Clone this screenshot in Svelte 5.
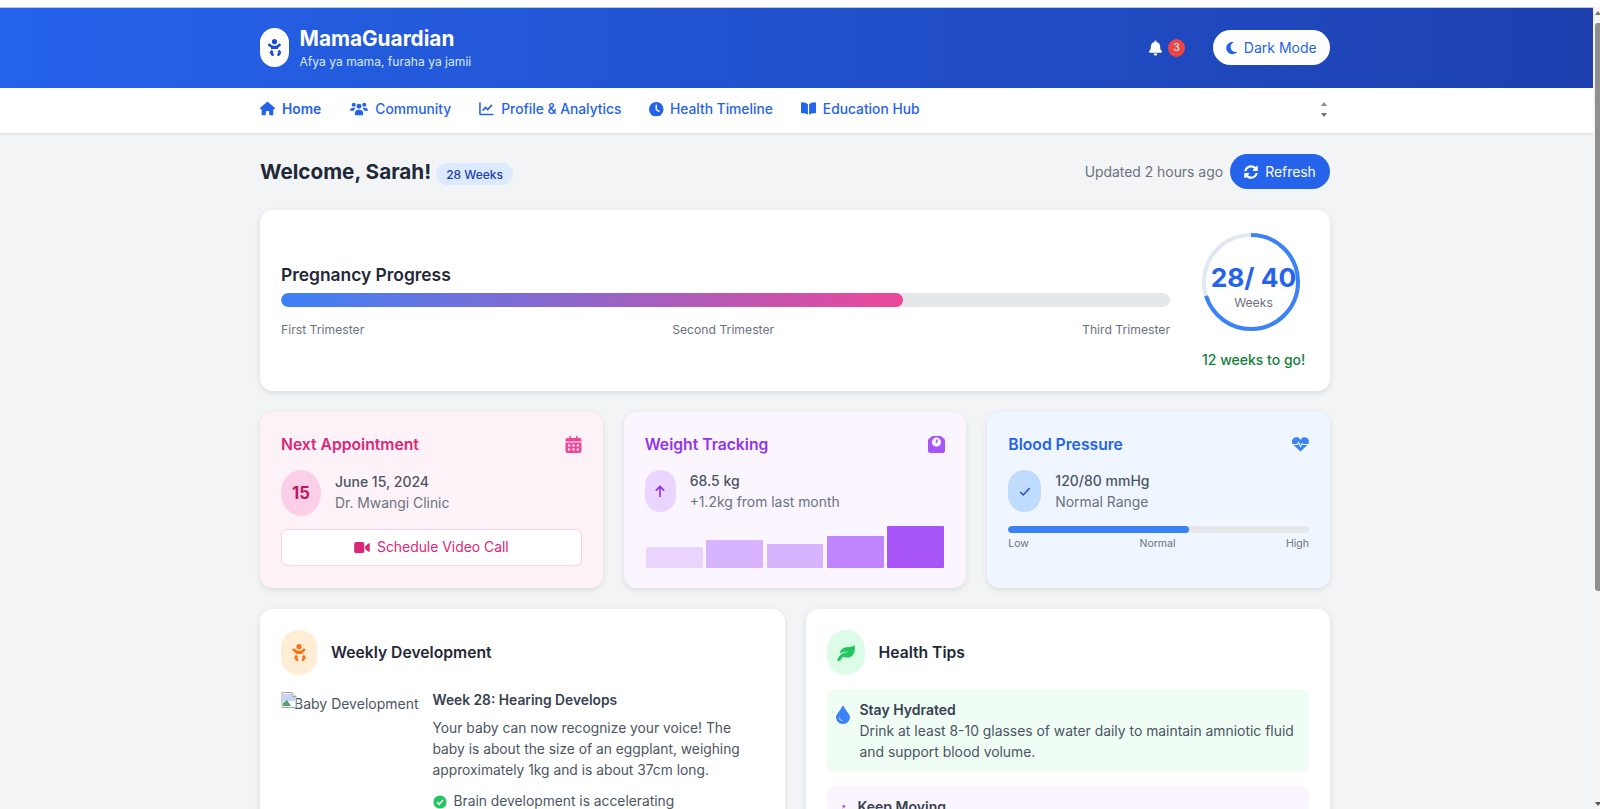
<script>
  const bars = [
    { h: 21, c: '#e9d5ff' },
    { h: 28, c: '#d8b4fe' },
    { h: 24, c: '#d8b4fe' },
    { h: 32, c: '#c084fc' },
    { h: 42, c: '#a855f7' }
  ];
</script>

{#snippet baby()}
  <svg viewBox="0 0 384 512" class="fill"><path d="M192 160c44.200 0 80-35.800 80-80S236.200 0 192 0s-80 35.800-80 80 35.800 80 80 80zm-53.400 248.800l25.600-32-61.500-51.200L56.800 383c-11.400 14.200-11.700 34.400-.8 49l48 64c7.900 10.500 19.900 16 32 16 8.300 0 16.800-2.600 24-8 17.700-13.200 21.200-38.300 8-56l-29.400-39.200zm142.700-32l25.600 32L277.500 448c-13.200 17.700-9.700 42.800 8 56 7.200 5.400 15.600 8 24 8 12.200 0 24.200-5.500 32-16l48-64c10.900-14.600 10.600-34.800-.8-49l-45.900-57.400-61.500 51.200zm94.500-223.200c-13.500-17.500-38.600-20.700-56.100-7.200l-31 24C270.800 197.200 230 200 192 200s-78.800-2.800-105-35.100l-31-24c-17.500-13.500-42.600-10.300-56.100 7.200-13.500 17.500-10.300 42.600 7.200 56.100L67 247.400c6.300 4.900 12.900 9.100 19.800 13V304h210.400v-43.500c6.900-3.900 13.500-8.200 19.800-13l51.600-36.700c17.500-13.500 20.700-38.600 7.200-56.100z"/></svg>
{/snippet}

<div class="page">
  <header>
    <div class="wrap head-row">
      <div class="brand">
        <span class="logo">{@render baby()}</span>
        <div>
          <h1>MamaGuardian</h1>
          <p>Afya ya mama, furaha ya jamii</p>
        </div>
      </div>
      <div class="head-right">
        <svg class="bell fill" viewBox="0 0 448 512"><path d="M224 0c-17.700 0-32 14.300-32 32V51.200C119 66 64 130.600 64 208v18.800c0 47-17.300 92.400-48.500 127.600l-7.400 8.300c-8.400 9.400-10.400 22.900-5.300 34.400S19.400 416 32 416H416c12.600 0 24-7.400 29.200-18.900s3.100-25-5.300-34.400l-7.400-8.300C401.300 319.200 384 273.900 384 226.800V208c0-77.400-55-142-128-156.800V32c0-17.700-14.300-32-32-32zm45.300 493.300c12-12 18.700-28.300 18.700-45.300H160c0 17 6.700 33.300 18.700 45.300s28.300 18.700 45.300 18.700s33.300-6.700 45.300-18.700z"/></svg>
        <span class="count">3</span>
        <button class="dark">
          <svg class="fill" viewBox="0 0 384 512"><path d="M223.500 32C100 32 0 132.300 0 256S100 480 223.500 480c60.600 0 115.500-24.200 155.800-63.400c5-4.900 6.300-12.500 3.100-18.700s-10.100-9.700-17-8.500c-9.800 1.700-19.800 2.600-30.100 2.600c-96.900 0-175.500-78.800-175.500-176c0-65.800 36-123.100 89.300-153.300c6.100-3.500 9.200-10.500 7.700-17.300s-7.300-11.900-14.300-12.500c-6.300-.5-12.600-.8-19-.8z"/></svg>
          Dark Mode
        </button>
      </div>
    </div>
  </header>

  <nav>
    <div class="wrap nav-row">
      <a class="active" href="#home">
        <svg class="fill" viewBox="0 0 576 512"><path d="M575.800 255.500c0 18-15 32.100-32 32.100h-32l.7 160.200c0 2.700-.2 5.400-.5 8.100V472c0 22.100-17.900 40-40 40H392c-22.100 0-40-17.900-40-40V384c0-17.700-14.300-32-32-32H256c-17.700 0-32 14.300-32 32v88c0 22.100-17.900 40-40 40H104c-22.100 0-40-17.900-40-40V360c0-.9 0-1.900.1-2.800V287.600H32c-18 0-32-14-32-32.100c0-9 3-17 10-24L266.400 8c7-7 15-8 22-8s15 2 21 7L564.800 231.500c8 7 12 15 11 24z"/></svg>
        Home
      </a>
      <a href="#community">
        <svg class="fill people" viewBox="0 0 24 18"><circle cx="5" cy="4" r="2.700"/><circle cx="19" cy="4" r="2.700"/><circle cx="12" cy="6" r="3.300"/><path d="M0 12c0-2.500 1.700-4 4-4h2c.5 0 1 .1 1.400.3C6 9.500 5.400 10.800 5.300 12H0zM24 12c0-2.500-1.700-4-4-4h-2c-.5 0-1 .1-1.400.3 1.400 1.200 2 2.500 2.100 3.700H24zM6.500 15c0-2.500 2-4.500 4.500-4.500h2c2.500 0 4.500 2 4.500 4.500v1.500c0 .8-.7 1.500-1.500 1.500H8c-.8 0-1.500-.7-1.500-1.500z"/></svg>
        Community
      </a>
      <a href="#profile">
        <svg viewBox="0 0 16 14" class="line"><path d="M1 .5v11.700c0 .7.500 1.200 1.200 1.200H15.500"/><path d="M3.800 9.300 7 5.800l2.300 2.300 4.500-5"/></svg>
        Profile &amp; Analytics
      </a>
      <a href="#timeline">
        <svg class="fill clock" viewBox="0 0 16 16"><circle cx="8" cy="8" r="8"/><path d="M8 3.500V8.300l3 2" fill="none" stroke="#fff" stroke-width="1.500" stroke-linecap="round"/></svg>
        Health Timeline
      </a>
      <a href="#education">
        <svg class="fill" viewBox="0 0 18 15"><path d="M8.300 2.600V15C6.600 13.800 4 13.300 1.200 13.300.5 13.300 0 12.800 0 12.100V1.400C0 .7.500.1 1.200.1 4 0 6.800.9 8.300 2.600zM9.700 2.600V15c1.700-1.200 4.300-1.700 7.100-1.700.7 0 1.200-.5 1.200-1.200V1.400C18 .7 17.500.1 16.800.1 14 0 11.200.9 9.700 2.600z"/></svg>
        Education Hub
      </a>
      <span class="spin"><i class="up"></i><i class="down"></i></span>
    </div>
  </nav>

  <main class="wrap">
    <section class="welcome">
      <div class="hello">
        <h2>Welcome, Sarah!</h2>
        <span class="weeks">28 Weeks</span>
      </div>
      <div class="update">
        <span>Updated 2 hours ago</span>
        <button class="refresh">
          <svg class="fill" viewBox="0 0 512 512"><path d="M370.720 133.280C339.458 104.008 298.888 87.962 255.848 88c-77.458.068-144.328 53.178-162.791 126.850-1.344 5.363-6.122 9.150-11.651 9.150H24.103c-7.498 0-13.194-6.807-11.807-14.176C33.933 94.924 134.813 8 256 8c66.448 0 126.791 26.136 171.315 68.685L463.030 40.970C478.149 25.851 504 36.559 504 57.941V192c0 13.255-10.745 24-24 24H345.941c-21.382 0-32.090-25.851-16.971-40.971l41.750-41.749zM32 296h134.059c21.382 0 32.090 25.851 16.971 40.971l-41.750 41.750c31.262 29.273 71.835 45.319 114.876 45.280 77.418-.07 144.315-53.144 162.787-126.849 1.344-5.363 6.122-9.150 11.651-9.150h57.304c7.498 0 13.194 6.807 11.807 14.176C478.067 417.076 377.187 504 256 504c-66.448 0-126.791-26.136-171.315-68.685L48.970 471.030C33.851 486.149 8 475.441 8 454.059V320c0-13.255 10.745-24 24-24z"/></svg>
          Refresh
        </button>
      </div>
    </section>

    <section class="card progress">
      <div class="track-col">
        <h3>Pregnancy Progress</h3>
        <div class="track"><div class="track-fill"></div></div>
        <div class="tri"><span>First Trimester</span><span>Second Trimester</span><span>Third Trimester</span></div>
      </div>
      <div class="ring-col">
        <div class="ring">
          <svg viewBox="0 0 98 98">
            <circle cx="49" cy="49" r="47" fill="none" stroke="#e2e8f0" stroke-width="4"/>
            <circle cx="49" cy="49" r="47" fill="none" stroke="#3b82f6" stroke-width="4" stroke-dasharray="207 295.300" transform="rotate(-90 49 49)"/>
          </svg>
          <div class="ring-text"><b>28/ 40</b><span>Weeks</span></div>
        </div>
        <p class="togo">12 weeks to go!</p>
      </div>
    </section>

    <section class="three">
      <div class="mini pink">
        <div class="mini-head">
          <h4>Next Appointment</h4>
          <svg class="mini-icon fill" viewBox="0 0 16 17"><path d="M4 0h1.500v2h5V0H12v2h2c1.100 0 2 .9 2 2v1.500H0V4c0-1.100.9-2 2-2h2zM0 6.500h16V15c0 1.100-.9 2-2 2H2c-1.100 0-2-.9-2-2z"/><g fill="#fdf2f8"><rect x="2.500" y="8.500" width="2.200" height="2"/><rect x="6.900" y="8.500" width="2.200" height="2"/><rect x="11.300" y="8.500" width="2.200" height="2"/><rect x="2.500" y="12.500" width="2.200" height="2"/><rect x="6.900" y="12.500" width="2.200" height="2"/><rect x="11.300" y="12.500" width="2.200" height="2"/></g></svg>
        </div>
        <div class="stat">
          <span class="dot day">15</span>
          <div><strong>June 15, 2024</strong><small>Dr. Mwangi Clinic</small></div>
        </div>
        <button class="call">
          <svg class="fill" viewBox="0 0 17 12"><rect width="11" height="12" rx="2"/><path d="M12 4.500 15.500 1.500c.6-.5 1.500-.1 1.500.7v7.600c0 .8-.9 1.200-1.500.7L12 7.500z"/></svg>
          Schedule Video Call
        </button>
      </div>

      <div class="mini purple">
        <div class="mini-head">
          <h4>Weight Tracking</h4>
          <svg class="mini-icon fill" viewBox="0 0 18 18"><path d="M5 0h8c.5 0 1 .2 1.300.5l3.200 3c.3.300.5.800.5 1.300V16c0 1.100-.9 2-2 2H2c-1.100 0-2-.9-2-2V4.800c0-.5.2-1 .5-1.300l3.200-3C4 .2 4.500 0 5 0z"/><circle cx="9" cy="6.500" r="4.800" fill="#faf5ff"/><path d="M9.800 3.800 8.600 7.500" stroke="#a855f7" stroke-width="1.500"/></svg>
        </div>
        <div class="stat">
          <span class="dot up-dot">
            <svg viewBox="0 0 12 14" class="glyph"><path d="M6 13V1.500M1.500 6 6 1.500 10.500 6"/></svg>
          </span>
          <div><strong>68.5 kg</strong><small>+1.2kg from last month</small></div>
        </div>
        <div class="bars">
          {#each bars as bar}
            <div style="height:{bar.h}px;background:{bar.c}"></div>
          {/each}
        </div>
      </div>

      <div class="mini blue">
        <div class="mini-head">
          <h4>Blood Pressure</h4>
          <svg class="mini-icon fill" viewBox="0 0 18 15"><path d="M9 15 1.600 8.100C-.5 6.100-.5 2.800 1.600 1 3.600-.7 6.500-.2 8 1.400L9 2.400l1-1C11.500-.2 14.400-.7 16.400 1c2.100 1.800 2.100 5.100 0 7.100z"/><path d="M0 7.500h5.500L7 5.200l2 4.300 1.800-3 1 1h6.200" fill="none" stroke="#eff6ff" stroke-width="1.200"/></svg>
        </div>
        <div class="stat">
          <span class="dot check-dot">
            <svg viewBox="0 0 14 11" class="glyph"><path d="M1.500 6 5 9.500 12.500 1.500"/></svg>
          </span>
          <div><strong>120/80 mmHg</strong><small>Normal Range</small></div>
        </div>
        <div class="bp"><div></div></div>
        <div class="bp-labels"><span>Low</span><span>Normal</span><span>High</span></div>
      </div>
    </section>

    <section class="two">
      <div class="card big">
        <div class="big-head">
          <span class="badge orange">{@render baby()}</span>
          <h3>Weekly Development</h3>
        </div>
        <div class="dev">
          <span class="broken">
            <svg viewBox="0 0 16 16"><path d="M1 .5h10l4 4V15.500H1z" fill="#fff" stroke="#a8a8a8"/><path d="M11 .5V4.500h4" fill="#ddd" stroke="#a8a8a8"/><path d="M2 2h8v3h4v4H2z" fill="#c3d4f5"/><path d="M2 14V11l4-3 4 6z" fill="#5aa469"/></svg>
            Baby Development
          </span>
          <div class="dev-text">
            <h5>Week 28: Hearing Develops</h5>
            <p>Your baby can now recognize your voice! The baby is about the size of an eggplant, weighing approximately 1kg and is about 37cm long.</p>
            <div class="li">
              <svg viewBox="0 0 16 16"><circle cx="8" cy="8" r="7.500" fill="#22c55e"/><path d="M4.500 8.200 7 10.700l4.500-5" fill="none" stroke="#fff" stroke-width="1.800"/></svg>
              Brain development is accelerating
            </div>
          </div>
        </div>
      </div>

      <div class="card big">
        <div class="big-head">
          <span class="badge green">
            <svg class="fill" viewBox="0 0 18 16"><path d="M17.700.2c.5 3.500.2 7.500-2 10-2.300 2.600-6.200 2.800-9.300 1.500C5 12.800 4 14.200 3.500 15.500 3.200 16 .9 16 .2 15.500c.5-2.500 2-4.800 4-6.200 2.200-1.500 4.800-2.200 7.300-2.300-2.800-.5-6.200 0-8.500 1.500C3 4.800 5.800 2.700 9.500 2.300 12.500 2 15.500 1.800 17.700.2z"/></svg>
          </span>
          <h3>Health Tips</h3>
        </div>
        <div class="tip mint">
          <svg class="tip-icon drop" viewBox="0 0 14 18"><path d="M7 0c.5 0 .9.300 1.100.800C9.500 4.500 14 8.300 14 11.300 14 15 10.900 18 7 18s-7-3-7-6.700C0 8.300 4.500 4.500 5.900.8 6.100.3 6.500 0 7 0z" fill="#3b82f6"/><path d="M3.300 11.500c0 1.800 1.500 3.200 3.200 3.200" fill="none" stroke="#dbeafe" stroke-width=".9"/></svg>
          <div><h5>Stay Hydrated</h5><p>Drink at least 8-10 glasses of water daily to maintain amniotic fluid and support blood volume.</p></div>
        </div>
        <div class="tip lilac">
          <svg class="tip-icon walk" viewBox="0 0 10 18"><circle cx="6" cy="2" r="1.800" fill="#a855f7"/><path d="M5 5 3 9l3 3-1 5M5 6l3 3M3 9l-2 3" fill="none" stroke="#a855f7" stroke-width="2"/></svg>
          <div><h5>Keep Moving</h5></div>
        </div>
      </div>
    </section>
  </main>

  <aside class="scrollbar">
    <i class="sb-up"></i>
    <div class="thumb"></div>
    <i class="sb-down"></i>
  </aside>
</div>

<style>
  :global(body) {
    margin: 0;
    background: #f3f4f6;
    font-family: Inter, "Noto Sans", sans-serif;
    overflow: hidden;
  }
  * {
    box-sizing: border-box;
  }
  h1, h2, h3, h4, h5, p {
    margin: 0;
  }
  button {
    font-family: inherit;
    cursor: pointer;
    border: none;
  }
  svg {
    display: block;
    flex: none;
  }
  .fill {
    fill: currentColor;
  }
  .page {
    position: relative;
    height: 809px;
    width: 1600px;
    overflow: hidden;
    padding-top: 7px;
    background: #f3f4f6;
  }
  .page::before {
    content: "";
    position: absolute;
    inset: 0 0 auto 0;
    height: 7px;
    background: #fff;
  }
  .wrap {
    width: 1070px;
    margin-left: 260px;
  }
  header {
    width: 1593px;
    height: 80.500px;
    background: linear-gradient(90deg, #2563eb, #1e40af);
    color: #fff;
    border-top: 1px solid #b9c8e8;
    position: relative;
    display: flex;
    align-items: center;
  }
  .head-row {
    display: flex;
    align-items: center;
    justify-content: space-between;
  }
  .brand {
    display: flex;
    align-items: center;
    gap: 10.500px;
  }
  .logo {
    width: 29px;
    height: 39px;
    border-radius: 15px;
    background: #fff;
    color: #1d4ed8;
    display: flex;
    align-items: center;
    justify-content: center;
  }
  .logo svg {
    width: 13px;
    height: 17px;
  }
  .brand h1 {
    font-size: 20.800px;
    line-height: 26px;
    font-weight: 700;
    margin-top: 1px;
  }
  .brand p {
    font-size: 12.100px;
    line-height: 17px;
    margin-top: 1px;
    color: #dbeafe;
  }
  .head-right {
    display: flex;
    align-items: center;
  }
  .bell {
    width: 13px;
    height: 16px;
  }
  .count {
    width: 17px;
    height: 18px;
    border-radius: 50%;
    background: #ef4444;
    font-size: 10.500px;
    display: flex;
    align-items: center;
    justify-content: center;
    margin-left: 6px;
    margin-right: 28px;
  }
  .dark {
    height: 35px;
    width: 117px;
    border-radius: 18px;
    background: #fff;
    color: #2563eb;
    font-size: 14px;
    display: flex;
    align-items: center;
    justify-content: center;
    gap: 6.500px;
  }
  .dark svg {
    width: 11px;
    height: 14px;
  }
  nav {
    width: 1593px;
    height: 45.500px;
    background: #fff;
    box-shadow: 0 1px 3px rgba(0, 0, 0, 0.1);
    position: relative;
  }
  .nav-row {
    height: 100%;
    display: flex;
    align-items: center;
    gap: 28px;
    position: relative;
    padding-bottom: 3px;
  }
  nav a {
    display: flex;
    align-items: center;
    gap: 7px;
    color: #2563eb;
    font-size: 13.800px;
    font-weight: 500;
    text-decoration: none;
  }
  nav a.active {
    font-weight: 600;
    margin-right: 1px;
  }
  nav a svg {
    width: 15px;
    height: 15px;
  }
  nav a svg.people {
    width: 18px;
  }
  nav a svg.clock {
    width: 14.500px;
    height: 14.500px;
    margin-right: -1px;
  }
  .line {
    fill: none;
    stroke: currentColor;
    stroke-width: 1.700;
  }
  .spin {
    position: absolute;
    right: 3px;
    top: 14px;
    display: flex;
    flex-direction: column;
    gap: 7px;
  }
  .spin i {
    width: 0;
    height: 0;
    border-left: 3.500px solid transparent;
    border-right: 3.500px solid transparent;
  }
  .spin .up {
    border-bottom: 4px solid #8c8c8c;
  }
  .spin .down {
    border-top: 4px solid #6e6e6e;
  }
  main {
    padding-top: 21px;
  }
  .welcome {
    display: flex;
    align-items: center;
    justify-content: space-between;
    height: 35px;
  }
  .hello {
    display: flex;
    align-items: center;
    gap: 5px;
  }
  .hello h2 {
    font-size: 20.700px;
    font-weight: 700;
    color: #1f2937;
  }
  .weeks {
    background: #dbeafe;
    color: #1e40af;
    font-size: 12px;
    font-weight: 500;
    padding: 0 10px;
    height: 22px;
    display: flex;
    align-items: center;
    border-radius: 11px;
    margin-top: 5px;
  }
  .update {
    display: flex;
    align-items: center;
    gap: 7px;
    color: #6b7280;
    font-size: 13.900px;
  }
  .refresh {
    height: 35px;
    width: 100px;
    border-radius: 18px;
    background: #2563eb;
    color: #fff;
    font-size: 13.900px;
    display: flex;
    align-items: center;
    justify-content: center;
    gap: 7px;
  }
  .refresh svg {
    width: 14px;
    height: 14px;
  }
  .card {
    background: #fff;
    border-radius: 12.500px;
    box-shadow: 0 2px 6px rgba(0, 0, 0, 0.1);
  }
  .progress {
    margin-top: 21px;
    height: 181px;
    padding: 0 21px;
    display: flex;
    align-items: center;
    gap: 32px;
  }
  .track-col {
    flex: 1;
    padding-top: 2px;
    min-width: 0;
  }
  .progress h3 {
    font-size: 17.400px;
    font-weight: 600;
    color: #1f2937;
    line-height: 20px;
  }
  .track {
    height: 14px;
    margin-top: 8px;
    background: #e5e7eb;
    border-radius: 7px;
    overflow: hidden;
  }
  .track-fill {
    width: 70%;
    height: 100%;
    border-radius: 7px;
    background: linear-gradient(90deg, #3b82f6, #ec4899);
  }
  .tri {
    display: flex;
    justify-content: space-between;
    margin-top: 15px;
    font-size: 12.200px;
    line-height: 16px;
    color: #6b7280;
  }
  .ring-col {
    width: 107px;
  }
  .ring {
    position: relative;
    width: 98px;
    height: 98px;
  }
  .ring-text {
    position: absolute;
    left: 0;
    top: 29px;
    width: 103px;
    display: flex;
    flex-direction: column;
    align-items: center;
  }
  .ring-text b {
    font-size: 26.300px;
    line-height: 32px;
    font-weight: 700;
    color: #2563eb;
    white-space: nowrap;
  }
  .ring-text span {
    font-size: 12.200px;
    line-height: 17px;
    color: #6b7280;
  }
  .togo {
    width: 103px;
    margin-top: 20px;
    text-align: center;
    font-size: 14px;
    font-weight: 500;
    color: #15803d;
    white-space: nowrap;
  }
  .three {
    margin-top: 21px;
    display: grid;
    grid-template-columns: repeat(3, 1fr);
    gap: 21px;
  }
  .mini {
    height: 176px;
    border-radius: 12.500px;
    padding: 22px 21px 21px;
    box-shadow: 0 2px 6px rgba(0, 0, 0, 0.1);
  }
  .pink {
    background: #fdf2f8;
    color: #db2777;
  }
  .purple {
    background: #faf5ff;
    color: #9333ea;
  }
  .blue {
    background: #eff6ff;
    color: #2563eb;
  }
  .mini-head {
    display: flex;
    justify-content: space-between;
    align-items: center;
    height: 21px;
  }
  .mini-head h4 {
    font-size: 15.700px;
    font-weight: 600;
  }
  .mini-icon {
    width: 17px;
    height: 17px;
  }
  .pink .mini-icon {
    color: #ec4899;
  }
  .purple .mini-icon {
    color: #a855f7;
  }
  .blue .mini-icon {
    color: #3b82f6;
  }
  .stat {
    margin-top: 14.500px;
    display: flex;
    align-items: center;
    gap: 14px;
  }
  .stat strong {
    display: block;
    font-size: 14px;
    line-height: 21px;
    font-weight: 500;
    color: #4b5563;
  }
  .stat small {
    display: block;
    font-size: 13.900px;
    line-height: 21px;
    margin-top: 1px;
    color: #6b7280;
  }
  .dot {
    border-radius: 50%;
    display: flex;
    align-items: center;
    justify-content: center;
    flex: none;
  }
  .day {
    width: 40px;
    height: 46px;
    background: #fbcfe8;
    color: #be185d;
    font-size: 16.700px;
    font-weight: 700;
  }
  .up-dot {
    width: 31px;
    height: 42px;
    background: #e9d5ff;
    color: #9333ea;
    border-radius: 16px;
  }
  .check-dot {
    width: 33px;
    height: 42px;
    background: #bfdbfe;
    color: #1d4ed8;
    border-radius: 17px;
  }
  .glyph {
    width: 12px;
    height: 13px;
    fill: none;
    stroke: currentColor;
    stroke-width: 1.800;
  }
  .call {
    margin-top: 13px;
    width: 100%;
    height: 37px;
    padding-top: 1px;
    background: #fff;
    border: 1px solid #fbcfe8;
    border-radius: 6px;
    color: #db2777;
    font-size: 13.900px;
    display: flex;
    align-items: center;
    justify-content: center;
    gap: 7px;
  }
  .call svg {
    width: 16px;
    height: 11px;
  }
  .bars {
    margin-top: 13.500px;
    height: 42px;
    padding: 0 1px;
    display: flex;
    align-items: flex-end;
    gap: 3.500px;
  }
  .bars div {
    flex: 1;
    border-radius: 1px;
  }
  .bp {
    margin-top: 13.500px;
    height: 7px;
    background: #e5e7eb;
    border-radius: 4px;
    overflow: hidden;
  }
  .bp div {
    width: 60%;
    height: 100%;
    background: #3b82f6;
    border-radius: 4px;
  }
  .bp-labels {
    display: flex;
    justify-content: space-between;
    margin-top: 3px;
    font-size: 10.500px;
    line-height: 15px;
    color: #6b7280;
  }
  .two {
    margin-top: 21px;
    display: grid;
    grid-template-columns: repeat(2, 1fr);
    gap: 21px;
    align-items: start;
  }
  .big {
    padding: 21px;
    height: 400px;
  }
  .big-head {
    display: flex;
    align-items: center;
    gap: 14px;
    height: 45px;
  }
  .big-head h3 {
    font-size: 15.700px;
    font-weight: 600;
    color: #1f2937;
  }
  .badge {
    height: 45px;
    width: 36px;
    border-radius: 18px;
    display: flex;
    align-items: center;
    justify-content: center;
    flex: none;
  }
  .orange {
    background: #ffedd5;
    color: #f97316;
  }
  .orange svg {
    width: 14px;
    height: 17px;
  }
  .green {
    width: 38px;
    background: #dcfce7;
    color: #22c55e;
    border-radius: 19px;
  }
  .green svg {
    width: 18px;
    height: 16px;
  }
  .dev {
    display: flex;
    margin-top: 15px;
    gap: 14.500px;
  }
  .broken {
    display: block;
    position: relative;
    width: 137px;
    flex: none;
    font-size: 14px;
    line-height: 21px;
    color: #4b5563;
    text-indent: 13px;
    white-space: nowrap;
    margin-top: 3px;
  }
  .broken svg {
    position: absolute;
    left: 0;
    top: -1px;
    width: 16px;
    height: 16px;
  }
  .dev-text h5 {
    font-size: 13.800px;
    line-height: 21px;
    font-weight: 600;
    color: #374151;
  }
  .dev-text p {
    margin-top: 7px;
    font-size: 13.800px;
    line-height: 21px;
    color: #4b5563;
  }
  .li {
    display: flex;
    align-items: center;
    gap: 7px;
    margin-top: 10px;
    font-size: 13.800px;
    line-height: 21px;
    color: #4b5563;
  }
  .li svg {
    width: 14px;
    height: 14px;
  }
  .tip {
    display: flex;
    align-items: flex-start;
    gap: 10px;
    padding: 10px;
    border-radius: 8px;
  }
  .tip h5 {
    font-size: 14px;
    line-height: 21px;
    font-weight: 600;
    color: #374151;
  }
  .tip p {
    margin-top: 1px;
    font-size: 13.900px;
    line-height: 21px;
    color: #4b5563;
  }
  .mint {
    margin-top: 14px;
    background: #f0fdf4;
    height: 83px;
  }
  .lilac {
    margin-top: 14px;
    background: #faf5ff;
    gap: 11px;
  }
  .drop {
    width: 14px;
    height: 18px;
    margin-left: -1px;
    margin-top: 7px;
  }
  .walk {
    width: 8px;
    height: 16px;
    margin-left: 2px;
    margin-top: 8px;
  }
  .scrollbar {
    position: absolute;
    left: 1593px;
    top: 7px;
    width: 7px;
    bottom: 0;
    background: #f4f4f4;
  }
  .thumb {
    position: absolute;
    left: 2px;
    right: 0;
    top: 16px;
    height: 568px;
    background: #8f8f8f;
    border-radius: 3px 0 0 3px;
  }
  .sb-up, .sb-down {
    position: absolute;
    left: 2px;
    width: 0;
    height: 0;
    border-left: 3px solid transparent;
    border-right: 3px solid transparent;
  }
  .sb-up {
    top: 4px;
    border-bottom: 4px solid #777;
  }
  .sb-down {
    bottom: 3px;
    border-top: 4px solid #555;
  }
</style>
